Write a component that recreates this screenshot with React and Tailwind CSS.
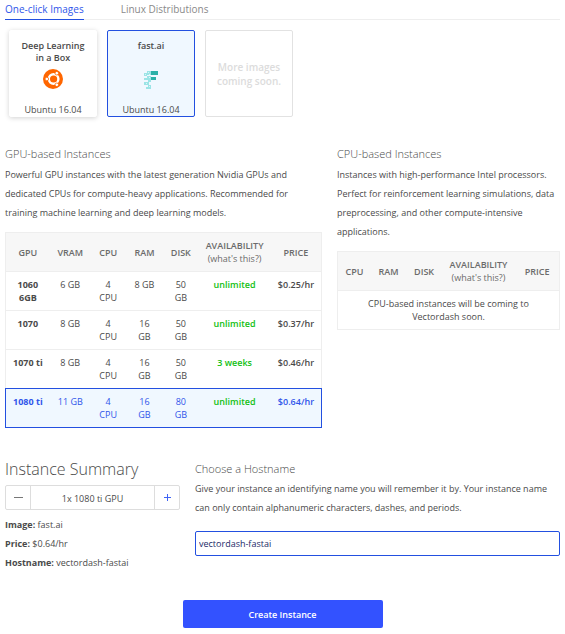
import { useState } from "react";

const gpuRows = [
  { name: "1060 6GB", vram: "6 GB", cpu: "4 CPU", ram: "8 GB", disk: "50 GB", availability: "unlimited", price: "$0.25/hr" },
  { name: "1070", vram: "8 GB", cpu: "4 CPU", ram: "16 GB", disk: "50 GB", availability: "unlimited", price: "$0.37/hr" },
  { name: "1070 ti", vram: "8 GB", cpu: "4 CPU", ram: "16 GB", disk: "50 GB", availability: "3 weeks", price: "$0.46/hr" },
  { name: "1080 ti", vram: "11 GB", cpu: "4 CPU", ram: "16 GB", disk: "80 GB", availability: "unlimited", price: "$0.64/hr" },
];

function UbuntuLogo() {
  return (
    <svg viewBox="0 0 100 100" className="size-5" aria-hidden="true">
      <circle cx="50" cy="50" r="50" fill="#ff6600" />
      <circle cx="53" cy="50" r="24" fill="none" stroke="#fff" strokeWidth="12" />
      <circle cx="19" cy="50" r="9" fill="#fff" stroke="#ff6600" strokeWidth="4" />
      <circle cx="69" cy="21" r="9" fill="#fff" stroke="#ff6600" strokeWidth="4" />
      <circle cx="69" cy="79" r="9" fill="#fff" stroke="#ff6600" strokeWidth="4" />
    </svg>
  );
}

function FastAiLogo() {
  return (
    <svg viewBox="0 0 14 18" className="h-[18px] w-[14px]" aria-hidden="true">
      <path fill="#9be4e6" d="M3 0h4v4H3zM0 2h3v3H0zM3 5h4v4H3zM0 7h3v2H0zM4 9h3v2H4zM0 11h5v3H0zM4 14h3v4H4zM2 16h2v2H2z" />
      <path fill="#d9f6f8" d="M4 1h1v1H4zM1 3h1v1H1zM5 6h1v1H5zM2 12h1v1H2zM5 3h1v1H5zM5 15h1v1H5z" />
      <path fill="#2bb0a8" d="M7 0h7v4H7zM7 6h5v3H7z" />
    </svg>
  );
}

function Availability() {
  return (
    <>
      AVAILABILITY
      <br />
      <a href="#availability" className="font-normal">(what's this?)</a>
    </>
  );
}

export default function App() {
  const [image, setImage] = useState("fast.ai");
  const [selected, setSelected] = useState("1080 ti");
  const [count, setCount] = useState(1);
  const [hostname, setHostname] = useState("vectordash-fastai");
  const current = gpuRows.find((row) => row.name === selected);
  const card = "flex h-[87px] w-[88px] flex-col items-center rounded-xs border pt-[9px] text-center";
  const cardOn = " border-[#2350e0] bg-[#f0f8ff]";
  const cardOff = " border-white bg-white shadow-[0_1px_5px_rgba(0,0,0,0.18)]";

  return (
    <main className="px-[5px] pb-1 font-['Open_Sans',sans-serif] text-[9px] leading-[19px] text-[#4a4a4a]">
      <nav className="flex gap-[37px] border-b border-[#eeeeee] text-[10px] leading-[18px]">
        <a href="#images" className="-mb-px border-b border-[#2350e0] pb-px text-[#2f55ea]">One-click Images</a>
        <a href="#linux" className="text-[#8a8a8a]">Linux Distributions</a>
      </nav>

      <section className="mt-[10px] flex gap-[10px] px-1">
        <button type="button" onClick={() => setImage("Deep Learning in a Box")} className={card + (image === "fast.ai" ? cardOff : cardOn)}>
          <span className="h-6 px-2 leading-[12px] font-semibold">Deep Learning in a Box</span>
          <span className="mt-[5px] h-[35px]"><UbuntuLogo /></span>
          <span className="leading-[12px]">Ubuntu 16.04</span>
        </button>
        <button type="button" onClick={() => setImage("fast.ai")} className={card + (image === "fast.ai" ? cardOn : cardOff)}>
          <span className="h-6 leading-[12px] font-semibold">fast.ai</span>
          <span className="mt-[7px] h-[33px]"><FastAiLogo /></span>
          <span className="leading-[12px]">Ubuntu 16.04</span>
        </button>
        <div className="flex h-[87px] w-[88px] items-center justify-center rounded-xs border border-[#e2e2e2] px-2 text-center text-[10px] leading-[14px] font-semibold text-[#dcdcdc]">
          More images coming soon.
        </div>
      </section>

      <div className="mt-[27px] grid grid-cols-[317fr_223fr] items-start gap-[15px]">
        <section>
          <h2 className="text-[11px] font-light">GPU-based Instances</h2>
          <p className="mt-[2px] pr-2">
            Powerful GPU instances with the latest generation Nvidia GPUs and dedicated CPUs for compute-heavy applications. Recommended for training machine learning and deep learning models.
          </p>
          <table className="mt-[10px] w-full table-fixed border-collapse border border-[#eeeeee] text-center leading-[13px]">
            <colgroup>
              <col className="w-[14%]" />
              <col className="w-[13%]" />
              <col className="w-[11%]" />
              <col className="w-[12%]" />
              <col className="w-[11%]" />
              <col className="w-[23%]" />
              <col className="w-[16%]" />
            </colgroup>
            <thead className="bg-[#f7f7f7] text-[#6b6b6b]">
              <tr>
                {["GPU", "VRAM", "CPU", "RAM", "DISK"].map((label) => (
                  <th key={label} className="py-[6px] font-semibold">{label}</th>
                ))}
                <th className="py-[6px] font-semibold"><Availability /></th>
                <th className="py-[6px] font-semibold">PRICE</th>
              </tr>
            </thead>
            <tbody>
              {gpuRows.map((row) => (
                <tr
                  key={row.name}
                  onClick={() => setSelected(row.name)}
                  className={row.name === selected ? "border border-[#2350e0] bg-[#f0f8ff] align-top text-[#2f55ea]" : "border-t border-[#eeeeee] align-top"}
                >
                  <td className="px-[5px] py-[6px] font-bold">{row.name}</td>
                  <td className="py-[6px]">{row.vram}</td>
                  <td className="px-2 py-[6px]">{row.cpu}</td>
                  <td className="px-[7px] py-[6px]">{row.ram}</td>
                  <td className="px-2 py-[6px]">{row.disk}</td>
                  <td className="py-[6px] font-semibold text-[#12c012]">{row.availability}</td>
                  <td className="py-[6px] font-semibold">{row.price}</td>
                </tr>
              ))}
            </tbody>
          </table>
        </section>

        <section>
          <h2 className="text-[11px] font-light">CPU-based Instances</h2>
          <p className="mt-[2px]">
            Instances with high-performance Intel processors. Perfect for reinforcement learning simulations, data preprocessing, and other compute-intensive applications.
          </p>
          <table className="mt-[10px] w-full table-fixed border-collapse border border-[#eeeeee] text-center leading-[13px]">
            <colgroup>
              <col className="w-[15%]" />
              <col className="w-[16%]" />
              <col className="w-[16%]" />
              <col className="w-[33%]" />
              <col className="w-[20%]" />
            </colgroup>
            <thead className="bg-[#f7f7f7] text-[#6b6b6b]">
              <tr>
                {["CPU", "RAM", "DISK"].map((label) => (
                  <th key={label} className="py-[6px] font-semibold">{label}</th>
                ))}
                <th className="py-[6px] font-semibold"><Availability /></th>
                <th className="py-[6px] font-semibold">PRICE</th>
              </tr>
            </thead>
            <tbody>
              <tr className="border-t border-[#eeeeee]">
                <td colSpan={5} className="px-6 py-[6px]">CPU-based instances will be coming to Vectordash soon.</td>
              </tr>
            </tbody>
          </table>
        </section>
      </div>

      <div className="mt-[30px] grid grid-cols-[175fr_365fr] items-start gap-[15px]">
        <section>
          <h2 className="text-[16px] leading-[22px] font-light">Instance Summary</h2>
          <div className="mt-[5px] flex h-[25px] rounded-xs border border-[#dddddd] text-center">
            <button type="button" aria-label="Remove a GPU" onClick={() => setCount(Math.max(1, count - 1))} className="flex w-6 items-center justify-center text-[#777777]">
              <svg viewBox="0 0 9 9" className="size-[9px]" aria-hidden="true"><path d="M0 4.5h9" stroke="currentColor" /></svg>
            </button>
            <output className="flex-1 border-x border-[#dddddd] leading-[25px]">{count}x {selected} GPU</output>
            <button type="button" aria-label="Add a GPU" onClick={() => setCount(count + 1)} className="flex w-6 items-center justify-center text-[#2f55ea]">
              <svg viewBox="0 0 7 7" className="size-[7px]" aria-hidden="true"><path d="M0 3.5h7M3.5 0v7" stroke="#3f63f5" /></svg>
            </button>
          </div>
          <p className="mt-[5px]"><b>Image:</b> {image}</p>
          <p><b>Price:</b> {current.price}</p>
          <p><b>Hostname:</b> {hostname}</p>
        </section>

        <section>
          <h2 className="mt-px text-[11px] font-light"><label htmlFor="hostname">Choose a Hostname</label></h2>
          <p className="mt-px">
            Give your instance an identifying name you will remember it by. Your instance name can only contain alphanumeric characters, dashes, and periods.
          </p>
          <input
            id="hostname"
            value={hostname}
            onChange={(event) => setHostname(event.target.value)}
            className="mt-[14px] block h-[25px] w-full rounded-xs border border-[#2350e0] px-[3px] text-[#232a66] outline-none"
          />
        </section>
      </div>

      <button type="button" className="mx-auto mt-7 block h-7 w-[200px] rounded-xs bg-[#3352ff] font-semibold text-white">
        Create Instance
      </button>
    </main>
  );
}
